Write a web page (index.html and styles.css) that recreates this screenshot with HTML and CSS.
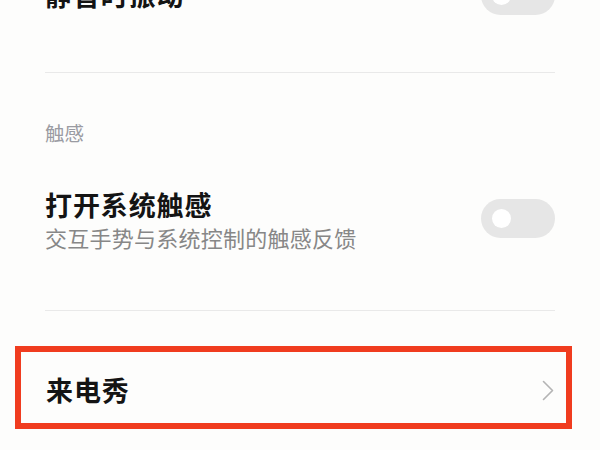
FILE: index.html
```html
<!DOCTYPE html>
<html lang="zh-CN">
<head>
<meta charset="utf-8">
<link rel="stylesheet" href="styles.css">
</head>
<body>
<div class="page">
  <div class="content">
    <div class="row row-first">
      <div class="title">静音时振动</div>
      <div class="toggle"><span class="knob"></span></div>
    </div>
    <div class="divider divider-first"></div>
    <div class="section-header">触感</div>
    <div class="row row-haptic">
      <div class="texts">
        <div class="title">打开系统触感</div>
        <div class="subtitle">交互手势与系统控制的触感反馈</div>
      </div>
      <div class="toggle toggle-haptic"><span class="knob"></span></div>
    </div>
    <div class="divider divider-second"></div>
  </div>
  <div class="callout">
    <div class="title">来电秀</div>
    <svg class="chevron" width="12" height="21" viewBox="0 0 12 21">
      <polyline points="1.5,1.5 10.5,10.5 1.5,19.5" fill="none" stroke="#b4b4b4" stroke-width="1.6" stroke-linecap="round" stroke-linejoin="round"/>
    </svg>
  </div>
</div>
</body>
</html>
```
FILE: styles.css
```css
html, body {
  margin: 0;
  padding: 0;
  background: #fdfdfc;
}
body {
  width: 600px;
  height: 450px;
  overflow: hidden;
  font-family: "Noto Sans CJK SC", "Noto Sans", sans-serif;
}
.page {
  margin-top: -45px;
}
.content {
  padding: 0 45px;
}
.row {
  display: flex;
  align-items: center;
  justify-content: space-between;
}
.row-first {
  height: 80px;
}
.title {
  font-size: 27px;
  line-height: 34px;
  font-weight: 600;
  color: #141414;
  letter-spacing: 0.9px;
}
.subtitle {
  font-size: 22px;
  line-height: 30px;
  color: #878787;
  letter-spacing: 0.25px;
}
.toggle {
  width: 74px;
  height: 39px;
  border-radius: 20px;
  background: #e6e6e6;
  display: flex;
  align-items: center;
  padding-left: 11px;
  box-sizing: border-box;
}
.knob {
  width: 19px;
  height: 19px;
  border-radius: 50%;
  background: #ffffff;
}
.divider {
  height: 1px;
  background: #e9e9e9;
}
.divider-first {
  margin-top: 37px;
}
.section-header {
  margin-top: 47px;
  font-size: 19.5px;
  line-height: 26px;
  color: #9a9ba2;
}
.row-haptic {
  padding-top: 42px;
}
.toggle-haptic {
  margin-bottom: 4px;
}
.divider-second {
  margin-top: 58px;
}
.callout {
  margin: 35px 28px 0 15px;
  height: 83px;
  box-sizing: border-box;
  border: 6px solid #f03c1f;
  padding: 5px 12px 0 25px;
  display: flex;
  align-items: center;
  justify-content: space-between;
}
.chevron {
  display: block;
}
```
